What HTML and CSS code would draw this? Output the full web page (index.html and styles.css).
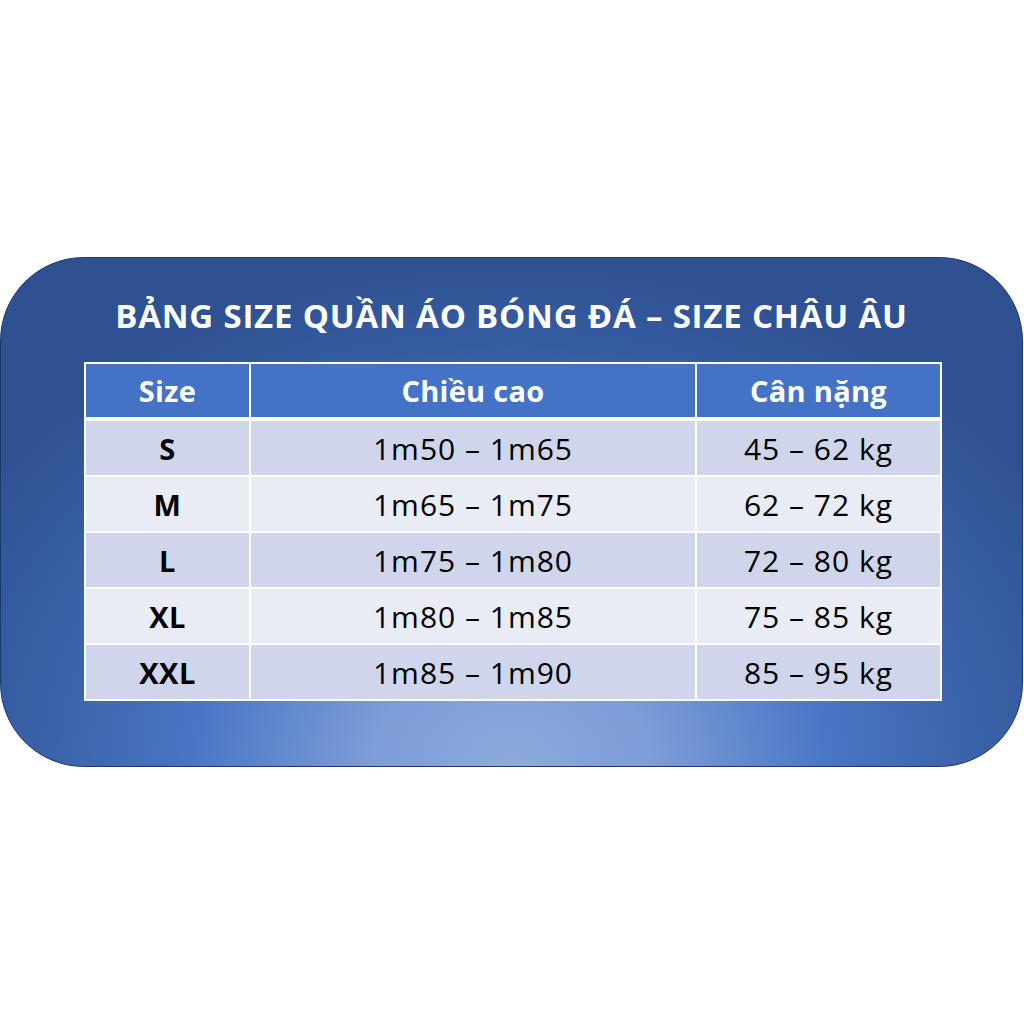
FILE: index.html
```html
<!DOCTYPE html>
<html lang="vi">
<head>
<meta charset="utf-8">
<link rel="stylesheet" href="styles.css">
</head>
<body>
<div class="card">
  <h1 class="title">BẢNG SIZE QUẦN ÁO BÓNG ĐÁ – SIZE CHÂU ÂU</h1>
  <table class="size-table">
    <thead>
      <tr><th class="c1">Size</th><th class="c2">Chiều cao</th><th class="c3">Cân nặng</th></tr>
    </thead>
    <tbody>
      <tr><td class="size">S</td><td>1m50 – 1m65</td><td>45 – 62 kg</td></tr>
      <tr><td class="size">M</td><td>1m65 – 1m75</td><td>62 – 72 kg</td></tr>
      <tr><td class="size">L</td><td>1m75 – 1m80</td><td>72 – 80 kg</td></tr>
      <tr><td class="size">XL</td><td>1m80 – 1m85</td><td>75 – 85 kg</td></tr>
      <tr><td class="size">XXL</td><td>1m85 – 1m90</td><td>85 – 95 kg</td></tr>
    </tbody>
  </table>
</div>
</body>
</html>
```
FILE: styles.css
```css
html, body {
  margin: 0;
  padding: 0;
  background: #ffffff;
}
body {
  width: 1024px;
  height: 1024px;
  font-family: "Open Sans", "Liberation Sans", sans-serif;
}
.card {
  margin-top: 257px;
  width: 1021px;
  height: 508px;
  border: 1px solid #1f3864;
  border-radius: 84px;
  box-sizing: content-box;
  background: radial-gradient(ellipse 62% 100% at 50% 100%, #8eaadc 0%, #7d9dd7 22%, #4a76c6 50%, #3b63a9 72%, #2e5192 100%);
  display: flex;
  flex-direction: column;
  align-items: flex-start;
}
.title {
  margin: 37px 0 0 0;
  width: 100%;
  text-align: center;
  color: #ffffff;
  font-weight: 700;
  font-size: 33px;
  line-height: 42px;
  letter-spacing: 0.8px;
}
.size-table {
  margin: 25px 0 0 83px;
  border-collapse: collapse;
  border: 2px solid #ffffff;
  table-layout: fixed;
}
.size-table th, .size-table td {
  border: 2px solid #ffffff;
  text-align: center;
  padding: 0;
  height: 54px;
}
.size-table th {
  background: #4472c4;
  color: #ffffff;
  font-weight: 700;
  font-size: 29px;
  letter-spacing: 0.3px;
  border-bottom-width: 4px;
  height: 53px;
}
.size-table td {
  color: #000000;
  font-size: 30px;
  font-weight: 400;
  letter-spacing: 1px;
}
.size-table tbody tr:nth-child(odd) td { background: #cfd5ea; }
.size-table tbody tr:nth-child(even) td { background: #e9ebf5; }
.size-table td.size { font-weight: 700; font-size: 29px; letter-spacing: 0.5px; }
.c1 { width: 163px; }
.c2 { width: 444px; }
.c3 { width: 243px; }
```
